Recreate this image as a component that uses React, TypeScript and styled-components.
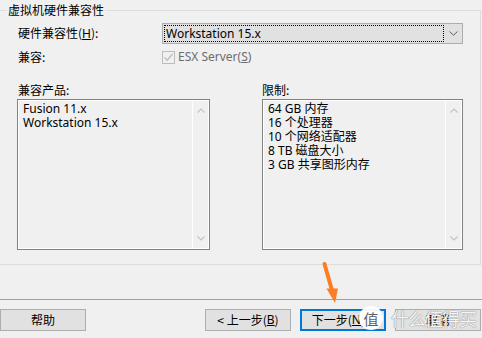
import React from "react";
import styled, { createGlobalStyle } from "styled-components";

const Global = createGlobalStyle`
  html, body { margin: 0; padding: 0; background: #f0f0f0; }
  body {
    font-family: "Noto Sans", "Noto Sans CJK SC", sans-serif;
    font-size: 12px;
    color: #000;
  }
  * { box-sizing: border-box; }
`;

const Page = styled.div`
  position: relative;
  width: 482px;
  height: 338px;
  overflow: hidden;
  background: #f0f0f0;
  display: flex;
  flex-direction: column;
`;

const Group = styled.fieldset`
  margin: 2px 1px 0 -4px;
  padding: 5px 0 14px 10px;
  border: 1px solid #dcdcdc;
  min-width: 0;
`;

const Legend = styled.legend`
  padding: 0 1px;
  height: 16px;
  line-height: 16px;
  font-family: "Noto Sans CJK SC", sans-serif;
`;

const FormGrid = styled.div`
  margin-left: 11px;
  display: grid;
  grid-template-columns: 144px 301px;
  grid-template-rows: 21px 14px;
  row-gap: 6px;
  align-items: center;
`;

const Label = styled.span`
  font-family: "Noto Sans CJK SC", sans-serif;
  line-height: 14px;
  white-space: nowrap;
`;

const Key = styled.span`
  text-decoration: underline;
  font-family: "Noto Sans", sans-serif;
`;

const Combo = styled.div`
  height: 21px;
  display: flex;
  align-items: stretch;
  background: #e1e1e1;
  border: 1px solid #adadad;
`;

const FocusRect = styled.div`
  flex: 1;
  margin: 1px 0 1px 1px;
  border: 1px dotted #000;
  padding-left: 1px;
  display: flex;
  align-items: center;
  line-height: 14px;
`;

const DropArrow = styled.div`
  width: 18px;
  display: flex;
  align-items: center;
  justify-content: center;
`;

const CheckRow = styled.label`
  display: flex;
  align-items: center;
  gap: 3px;
  color: #6d6d6d;
  line-height: 14px;
`;

const CheckBox = styled.span`
  width: 13px;
  height: 13px;
  border: 1px solid #bcbcbc;
  background: #f0f0f0;
  display: flex;
  align-items: center;
  justify-content: center;
`;

const ListsGrid = styled.div`
  margin-top: 18px;
  margin-left: 10px;
  display: grid;
  grid-template-columns: 193px 201px;
  column-gap: 52px;
`;

const ListColumn = styled.div`
  display: flex;
  flex-direction: column;
`;

const ListLabel = styled.span<{ $indent?: number }>`
  height: 17px;
  line-height: 16px;
  padding-left: ${(p) => p.$indent ?? 0}px;
  font-family: "Noto Sans CJK SC", sans-serif;
`;

const ListBox = styled.div`
  height: 151px;
  border: 1px solid #828282;
  box-shadow: inset 0 0 0 1px #ffffff;
  display: grid;
  grid-template-columns: 1fr 17px;
`;

const Items = styled.div`
  padding: 2px 4px 0 5px;
  display: flex;
  flex-direction: column;
`;

const Item = styled.span`
  line-height: 14px;
  height: 14px;
  white-space: nowrap;
`;

const ScrollTrack = styled.div`
  border-left: 1px solid #ffffff;
  display: flex;
  flex-direction: column;
  justify-content: space-between;
  align-items: center;
  padding: 8px 0 8px;
`;

const Separator = styled.div`
  margin-top: 34px;
  height: 1px;
  background: #a0a0a0;
`;

const ButtonRow = styled.div`
  margin-top: 9px;
  display: flex;
  align-items: center;
  padding-right: 1px;
`;

const Spacer = styled.div`
  flex: 1;
`;

const ButtonGroup = styled.div`
  display: flex;
  gap: 9px;
`;

const Button = styled.button<{ $primary?: boolean }>`
  width: 86px;
  height: 22px;
  padding: 0;
  margin: 0;
  background: #e1e1e1;
  border: ${(p) => (p.$primary ? "2px solid #0078d7" : "1px solid #adadad")};
  font-family: "Noto Sans CJK SC", "Noto Sans", sans-serif;
  font-size: 12px;
  line-height: 14px;
  color: #000;
  white-space: pre;
  display: flex;
  align-items: center;
  justify-content: center;
`;

const Arrow = styled.svg`
  position: absolute;
  left: 318px;
  top: 260px;
`;

const Watermark = styled.div`
  position: absolute;
  left: 359px;
  top: 306px;
  display: flex;
  align-items: center;
  gap: 8px;
  pointer-events: none;
`;

const LogoCircle = styled.div`
  width: 24px;
  height: 24px;
  border-radius: 50%;
  background: rgba(255, 255, 255, 0.95);
  display: flex;
  align-items: center;
  justify-content: center;
  font-family: "Noto Sans CJK SC", sans-serif;
  font-size: 15px;
  color: #5a6170;
  line-height: 1;
`;

const WatermarkText = styled.span`
  font-family: "Noto Sans CJK SC", sans-serif;
  font-size: 18px;
  letter-spacing: -1px;
  line-height: 22px;
  color: rgba(255, 255, 255, 0.92);
  text-shadow: 0 0 1px #8a8a8a, 0 0 1px #8a8a8a;
`;

const Chevron = ({ up }: { up?: boolean }) => (
  <svg width="8" height="5" viewBox="0 0 8 5">
    <path
      d={up ? "M0.5 4.5 L4 1 L7.5 4.5" : "M0.5 0.5 L4 4 L7.5 0.5"}
      fill="none"
      stroke="#c4c4c4"
      strokeWidth="1.2"
    />
  </svg>
);

const products = ["Fusion 11.x", "Workstation 15.x"];
const limits = ["64 GB 内存", "16 个处理器", "10 个网络适配器", "8 TB 磁盘大小", "3 GB 共享图形内存"];

export default function App() {
  return (
    <Page>
      <Global />
      <Group>
        <Legend>虚拟机硬件兼容性</Legend>
        <FormGrid>
          <Label>
            硬件兼容性(<Key>H</Key>):
          </Label>
          <Combo>
            <FocusRect>Workstation 15.x</FocusRect>
            <DropArrow>
              <svg width="9" height="5" viewBox="0 0 9 5">
                <path d="M0.5 0.5 L4.5 4.2 L8.5 0.5" fill="none" stroke="#606060" strokeWidth="1" />
              </svg>
            </DropArrow>
          </Combo>
          <Label>兼容:</Label>
          <CheckRow>
            <CheckBox>
              <svg width="11" height="11" viewBox="0 0 11 11">
                <path d="M1.5 5.5 L4.2 8.2 L9.5 2" fill="none" stroke="#bcbcbc" strokeWidth="1.3" />
              </svg>
            </CheckBox>
            <span>
              ESX Server(<Key>S</Key>)
            </span>
          </CheckRow>
        </FormGrid>
        <ListsGrid>
          <ListColumn>
            <ListLabel $indent={1}>兼容产品:</ListLabel>
            <ListBox>
              <Items>
                {products.map((p) => (
                  <Item key={p}>{p}</Item>
                ))}
              </Items>
              <ScrollTrack>
                <Chevron up />
                <Chevron />
              </ScrollTrack>
            </ListBox>
          </ListColumn>
          <ListColumn>
            <ListLabel>限制:</ListLabel>
            <ListBox>
              <Items>
                {limits.map((l) => (
                  <Item key={l}>{l}</Item>
                ))}
              </Items>
              <ScrollTrack>
                <Chevron up />
                <Chevron />
              </ScrollTrack>
            </ListBox>
          </ListColumn>
        </ListsGrid>
      </Group>
      <Separator />
      <ButtonRow>
        <Button>帮助</Button>
        <Spacer />
        <ButtonGroup>
          <Button>
            &lt; 上一步(<Key>B</Key>)
          </Button>
          <Button $primary>
            下一步(<Key>N</Key>) &gt;
          </Button>
          <Button>取消</Button>
        </ButtonGroup>
      </ButtonRow>
      <Arrow width="26" height="46" viewBox="0 0 26 46">
        <path d="M6.5 4 L14.5 32" stroke="#fb7d24" strokeWidth="4" strokeLinecap="round" fill="none" />
        <polygon points="8.5,28.5 20,28.5 17,43" fill="#fb7d24" />
      </Arrow>
      <Watermark>
        <LogoCircle>值</LogoCircle>
        <WatermarkText>什么值得买</WatermarkText>
      </Watermark>
    </Page>
  );
}
